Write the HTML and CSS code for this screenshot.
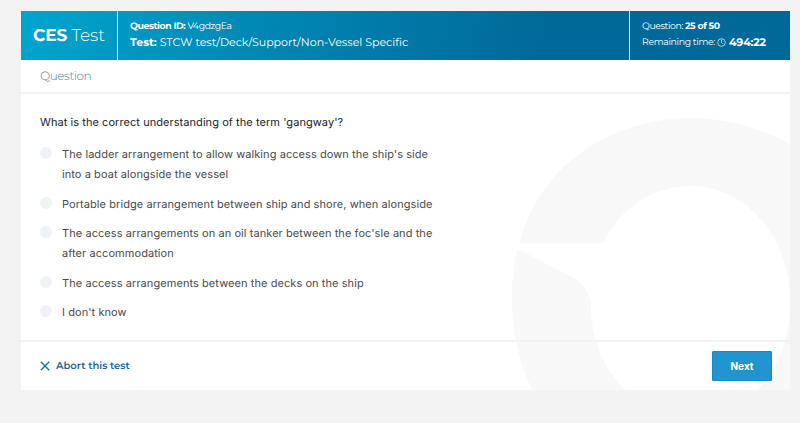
FILE: index.html
```html
<!DOCTYPE html>
<html lang="en">
<head>
<meta charset="utf-8">
<title>CES Test</title>
<link rel="stylesheet" href="styles.css">
</head>
<body>
<main class="card">
  <svg class="watermark" viewBox="21 11 769 379" aria-hidden="true">
    <path d="M523 243.500Q519 243.500 520.500 239C542 163 614 118 691 118C730 118 765 130 790 144.500V292C786 234 744 186 691 186C653 186 621 208 605 240Q603.500 243.500 601 243.500Z"/>
    <path d="M516.500 252Q518 249 522 251L572 277C588 286 591 298 591 310C592 340 604 370 626 390H532C512 348 507 297 516.500 252Z"/>
    <path d="M790 310V390H757C777 371 788 341 790 310Z"/>
  </svg>
  <header class="header">
    <div class="brand"><span class="brand-name"><b>CES</b> Test</span></div>
    <div class="details">
      <p class="small"><span class="question-id"><b>Question ID:</b> V4gdzgEa</span></p>
      <p><span class="test-name"><b>Test:</b> STCW test/Deck/Support/Non-Vessel Specific</span></p>
    </div>
    <div class="progress">
      <p class="small"><span>Question:</span> <b class="count">25 of 50</b></p>
      <p class="remaining"><span>Remaining time:</span>
        <svg class="clock" viewBox="0 0 9 9"><circle cx="4.500" cy="4.500" r="3.800"/><path d="M4.500 1.500V4.500L5.600 5.700"/></svg>
        <b class="time">494:22</b></p>
    </div>
  </header>
  <div class="section-title"><span>Question</span></div>
  <section class="body">
    <h1>What is the correct understanding of the term 'gangway'?</h1>
    <ul class="answers">
      <li><i class="radio"></i><span>The ladder arrangement to allow walking access down the ship's side<br>into a boat alongside the vessel</span></li>
      <li><i class="radio"></i><span>Portable bridge arrangement between ship and shore, when alongside</span></li>
      <li><i class="radio"></i><span>The access arrangements on an oil tanker between the foc'sle and the<br>after accommodation</span></li>
      <li><i class="radio"></i><span>The access arrangements between the decks on the ship</span></li>
      <li><i class="radio"></i><span>I don't know</span></li>
    </ul>
  </section>
  <footer class="footer">
    <a class="abort"><svg viewBox="0 0 9 9"><path d="M.7.700L8.300 8.300M8.300.700L.7 8.300"/></svg><span>Abort this test</span></a>
    <button class="next">Next</button>
  </footer>
</main>
</body>
</html>
```
FILE: styles.css
```css
* { box-sizing: border-box; }
body {
  margin: 0;
  padding: 11px 10px 33px 21px;
  background: #f3f3f3;
  font-family: Inter, "Liberation Sans", sans-serif;
  text-rendering: geometricPrecision;
}
p, h1, ul { margin: 0; padding: 0; }
.card {
  position: relative;
  display: flex;
  flex-direction: column;
  width: 769px;
  height: 379px;
  background: #fff;
}
.watermark {
  position: absolute;
  inset: 0;
  width: 769px;
  height: 379px;
  fill: #f8f8f8;
}
.header, .section-title, .body, .footer { position: relative; }
.header {
  display: flex;
  height: 49px;
  color: #fff;
  font-family: Montserrat, Inter, sans-serif;
  background: linear-gradient(100deg, #00a5ce 0%, #0088b5 30%, #006999 68%);
}
.header p { white-space: nowrap; font-size: 11px; font-weight: 400; line-height: 16px; letter-spacing: .02px; }
.header .small { font-size: 9.300px; line-height: 12px; letter-spacing: -.4px; }
.header b { font-weight: 700; }
.brand {
  display: flex;
  align-items: center;
  width: 97px;
  padding-left: 12px;
  border-right: 1px solid #d7f1f8;
  font-size: 17px;
  font-weight: 300;
  letter-spacing: -.1px;
  white-space: nowrap;
}
.details { flex: 1; padding: 10px 0 0 12px; }
.progress { width: 161px; padding: 10px 0 0 12px; border-left: 1px solid #d7edf5; }
.progress .remaining { display: flex; align-items: center; font-size: 9.300px; height: 20px; letter-spacing: -.32px; }
.details p + p { line-height: 18px; }
.clock { width: 9px; height: 9px; margin: 0 3px 2px 2px; fill: none; stroke: #d6e8f0; stroke-width: .8; }
.time { font-size: 11px; margin-bottom: 2px; letter-spacing: -.2px; }
.section-title {
  height: 34px;
  padding: 8px 19px 6px;
  border-bottom: 2px solid #f1f3f5;
  color: #527fa8;
  font: 300 12px/18px Montserrat, Inter, sans-serif;
  letter-spacing: -.4px;
}
.body { height: 246px; padding: 18px 19px 0; }
h1 { color: #202225; font-size: 11px; font-weight: 400; line-height: 20px; letter-spacing: .06px; white-space: nowrap; }
.answers { margin-top: 12px; list-style: none; display: flex; flex-direction: column; gap: 9.500px; }
.answers li { display: flex; gap: 10px; color: #484a4c; font-size: 11px; line-height: 20px; letter-spacing: .07px; white-space: nowrap; }
.radio { flex: none; width: 12px; height: 12px; margin-top: 3.400px; border-radius: 50%; background: #eff3f7; }
.footer {
  display: flex;
  align-items: center;
  justify-content: space-between;
  height: 50px;
  padding: 0 18px 0 19px;
  border-top: 2px solid #f2f2f3;
}
.abort { display: flex; align-items: center; gap: 6px; color: #156796; font: 600 10px/20px Montserrat, Inter, sans-serif; }
.abort svg { width: 10px; height: 10px; fill: none; stroke: #0c7399; stroke-width: 1.200; }
.next {
  width: 60px;
  height: 30px;
  padding: 0;
  border: 1px solid #118bc5;
  border-radius: 1px;
  background: #2095d0;
  color: #fff;
  font: 700 10px/20px Inter, sans-serif;
}
```
